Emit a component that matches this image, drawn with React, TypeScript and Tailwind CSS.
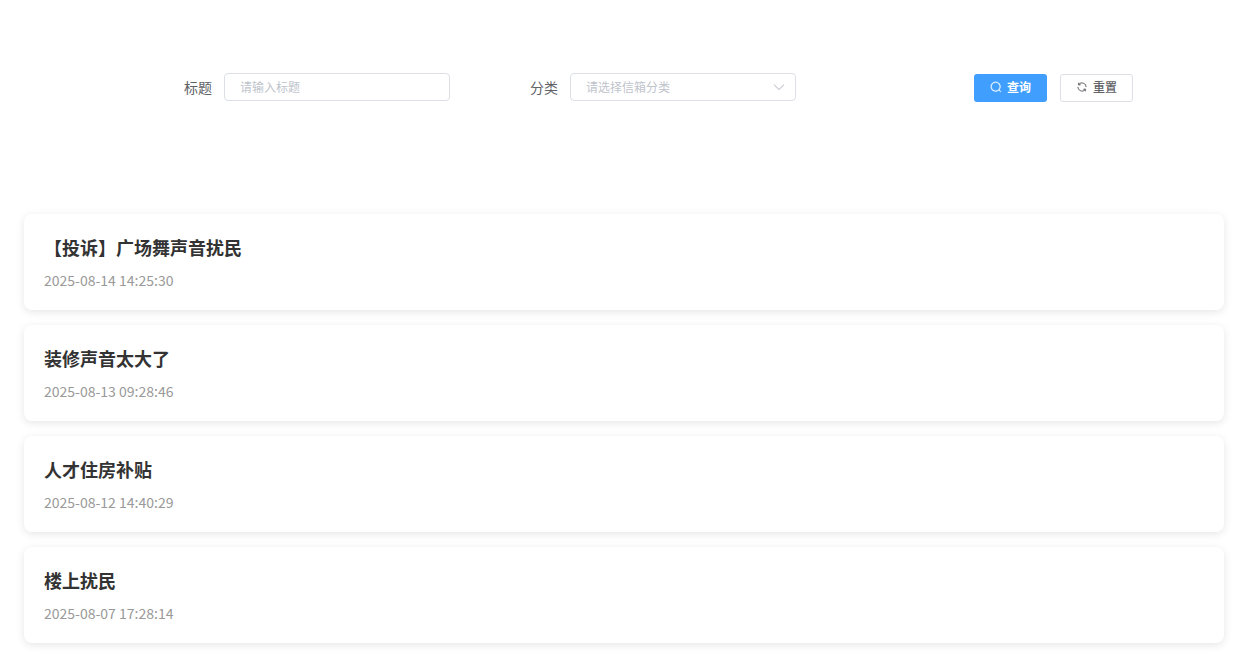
const letters = [
  { id: 1, title: '【投诉】广场舞声音扰民', time: '2025-08-14 14:25:30' },
  { id: 2, title: '装修声音太大了', time: '2025-08-13 09:28:46' },
  { id: 3, title: '人才住房补贴', time: '2025-08-12 14:40:29' },
  { id: 4, title: '楼上扰民', time: '2025-08-07 17:28:14' },
]

function SearchIcon() {
  return (
    <svg viewBox="0 0 1024 1024" className="size-3" fill="currentColor" stroke="currentColor" strokeWidth="24" aria-hidden="true">
      <path d="m795.904 750.72 124.992 124.928a32 32 0 0 1-45.248 45.248L750.656 795.904a416 416 0 1 1 45.248-45.248zM480 832a352 352 0 1 0 0-704 352 352 0 0 0 0 704z" />
    </svg>
  )
}

function RefreshIcon() {
  return (
    <svg viewBox="0 0 1024 1024" className="size-3" fill="currentColor" stroke="currentColor" strokeWidth="16" aria-hidden="true">
      <path d="M771.776 794.88A384 384 0 0 1 128 512h64a320 320 0 0 0 555.712 216.448H654.72a32 32 0 1 1 0-64h149.056a32 32 0 0 1 32 32v148.928a32 32 0 1 1-64 0v-50.56zM276.288 295.616h92.992a32 32 0 0 1 0 64H220.16a32 32 0 0 1-32-32V178.56a32 32 0 0 1 64 0v50.56A384 384 0 0 1 896.128 512h-64a320 320 0 0 0-555.776-216.384z" />
    </svg>
  )
}

function ArrowDownIcon() {
  return (
    <svg
      viewBox="0 0 1024 1024"
      className="pointer-events-none absolute top-1/2 right-2.5 size-3.5 -translate-y-1/2 text-[#c0c4cc]"
      fill="currentColor"
      stroke="currentColor"
      strokeWidth="16"
      aria-hidden="true"
    >
      <path d="M831.872 340.864 512 652.672 192.128 340.864a30.592 30.592 0 0 0-42.752 0 29.12 29.12 0 0 0 0 41.6L489.664 714.24a32 32 0 0 0 44.672 0l340.288-331.712a29.12 29.12 0 0 0 0-41.728 30.592 30.592 0 0 0-42.752 0z" />
    </svg>
  )
}

export default function App() {
  return (
    <div className="pt-[73px] pr-[22px] pb-5 pl-6 font-['Noto_Sans_CJK_SC',sans-serif]">
      <form className="mb-28 grid grid-cols-3 items-start pr-[82px] pl-20" onSubmit={(e) => e.preventDefault()}>
        <div className="flex items-center">
          <label htmlFor="title" className="w-[120px] shrink-0 pr-3 text-right text-sm text-[#606266]">
            标题
          </label>
          <input
            id="title"
            type="text"
            placeholder="请输入标题"
            className="h-7 w-full min-w-0 rounded border border-[#dcdfe6] px-[15px] pb-0.5 text-xs outline-none placeholder:text-[#c0c4cc]"
          />
        </div>
        <div className="flex items-center">
          <label htmlFor="category" className="w-[120px] shrink-0 pr-3 text-right text-sm text-[#606266]">
            分类
          </label>
          <div className="relative min-w-0 flex-1">
            <select
              id="category"
              defaultValue=""
              className="block h-7 w-full appearance-none rounded border border-[#dcdfe6] bg-white px-[15px] pb-px text-xs text-[#c0c4cc] outline-none"
            >
              <option value="">请选择信箱分类</option>
            </select>
            <ArrowDownIcon />
          </div>
        </div>
        <div className="flex justify-end gap-[13px] pt-px pr-[9px]">
          <button
            type="submit"
            className="flex h-7 w-[73px] items-center justify-center gap-[5px] rounded-[3px] bg-[#409eff] pb-0.5 text-xs font-bold text-white"
          >
            <SearchIcon />
            查询
          </button>
          <button
            type="reset"
            className="flex h-7 w-[73px] items-center justify-center gap-[5px] rounded-[3px] border border-[#dcdfe6] bg-white pb-0.5 text-xs font-medium text-[#606266]"
          >
            <RefreshIcon />
            重置
          </button>
        </div>
      </form>
      <ul className="flex flex-col gap-[15px]">
        {letters.map((letter) => (
          <li key={letter.id} className="rounded-lg bg-white p-5 shadow-[0_2px_8px_rgba(0,0,0,0.1)]">
            <h3 className="text-lg leading-[26px] font-bold text-[#333]">{letter.title}</h3>
            <time className="mt-2.5 block text-sm leading-5 text-[#999]">{letter.time}</time>
          </li>
        ))}
      </ul>
    </div>
  )
}
